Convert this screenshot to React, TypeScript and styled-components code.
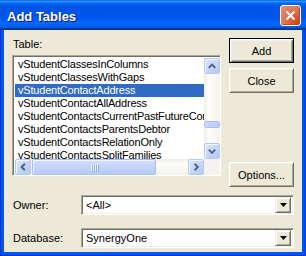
import styled, { createGlobalStyle } from 'styled-components'

const GlobalStyle = createGlobalStyle`
  body {
    margin: 0;
    background: #ffffff;
    font-family: "Liberation Sans", Arial, sans-serif;
  }
`

const tables = [
  'vStudentClassesInColumns',
  'vStudentClassesWithGaps',
  'vStudentContactAddress',
  'vStudentContactAllAddress',
  'vStudentContactsCurrentPastFutureContacts',
  'vStudentContactsParentsDebtor',
  'vStudentContactsRelationOnly',
  'vStudentContactsSplitFamilies',
]

const Window = styled.div`
  width: 306px;
  height: 256px;
  display: flex;
  flex-direction: column;
  background: #0055ea;
  box-sizing: border-box;
  border: 1px solid #0831d9;
  border-top: none;
`

const TitleBar = styled.div`
  height: 30px;
  margin: 0 -1px;
  display: flex;
  align-items: center;
  justify-content: space-between;
  padding: 0 5px 0 7px;
  background: linear-gradient(
    to bottom,
    #0058ee 0%,
    #3593ff 4%,
    #288eff 6%,
    #127dff 8%,
    #036ffc 10%,
    #0262ee 14%,
    #0057e5 20%,
    #0054e3 24%,
    #0055eb 56%,
    #005bf5 66%,
    #026afe 76%,
    #0062ef 86%,
    #0052d6 92%,
    #0040ab 94%,
    #003092 100%
  );
`

const Title = styled.span`
  color: #ffffff;
  font-weight: bold;
  font-size: 13px;
  padding-top: 2px;
  text-shadow: 1px 1px #0f1089;
`

const CloseButton = styled.div`
  width: 19px;
  height: 19px;
  border: 1px solid #ffffff;
  border-radius: 3px;
  display: flex;
  align-items: center;
  justify-content: center;
  background: radial-gradient(circle at 85% 85%, #cc4614 0%, #dc6a44 40%, #e2937b 100%);
  box-shadow: inset -1px -1px 0 #c0441c;
`

const Body = styled.div`
  flex: 1;
  margin: 0 3px 3px;
  background: #ece9d8;
  padding: 8px 8px 0 8px;
  display: flex;
  flex-direction: column;
  font-size: 11px;
  color: #000000;
`

const TopSection = styled.div`
  display: flex;
  gap: 8px;
`

const LeftCol = styled.div`
  width: 209px;
  display: flex;
  flex-direction: column;
`

const Label = styled.div`
  line-height: 13px;
  height: 13px;
  margin-bottom: 4px;
  padding-left: 1px;
`

const sunken = `
  border-top: 1px solid #aca899;
  border-left: 1px solid #aca899;
  border-bottom: 1px solid #ffffff;
  border-right: 1px solid #ffffff;
  box-shadow: inset 1px 1px 0 #716f64, inset -1px -1px 0 #f1efe2;
`

const ListBox = styled.div`
  ${sunken}
  height: 121px;
  box-sizing: border-box;
  padding: 2px;
  background: #ffffff;
  display: grid;
  grid-template-columns: 189px 16px;
  grid-template-rows: 101px 16px;
`

const Items = styled.div`
  overflow: hidden;
`

const Item = styled.div<{ $selected?: boolean }>`
  height: 13px;
  line-height: 13px;
  padding-left: 3px;
  white-space: nowrap;
  letter-spacing: -0.2px;
  background: ${(p) => (p.$selected ? '#316ac5' : 'transparent')};
  color: ${(p) => (p.$selected ? '#ffffff' : '#000000')};
`

const VTrack = styled.div`
  display: flex;
  flex-direction: column;
  background: linear-gradient(to right, #eeede5 0%, #fdfdfa 30%, #f4f3ee 100%);
`

const HTrack = styled.div`
  display: flex;
  background: linear-gradient(to bottom, #eeede5 0%, #fdfdfa 30%, #f4f3ee 100%);
`

const Corner = styled.div`
  background: #f4f3ee;
`

const ScrollBtn = styled.div`
  width: 16px;
  height: 16px;
  box-sizing: border-box;
  flex-shrink: 0;
  border: 1px solid #b4c8f6;
  border-radius: 2px;
  background: linear-gradient(135deg, #dbe6fd 0%, #c5d6fc 50%, #b4c8f6 100%);
  box-shadow: inset 1px 1px 0 #f2f6fe;
  display: flex;
  align-items: center;
  justify-content: center;
`

const TrackSpace = styled.div<{ $vertical?: boolean }>`
  flex: 1;
  display: flex;
  flex-direction: ${(p) => (p.$vertical ? 'column' : 'row')};
  padding: ${(p) => (p.$vertical ? '0' : '0 1px')};
`

const VThumb = styled.div`
  margin-top: 47px;
  height: 7px;
  box-sizing: border-box;
  border: 1px solid #a9bff0;
  border-radius: 2px;
  background: linear-gradient(to right, #cad9fd, #b9cdf8);
`

const HThumb = styled.div`
  width: 124px;
  box-sizing: border-box;
  border: 1px solid #a9bff0;
  border-radius: 2px;
  background: linear-gradient(to bottom, #d2defc 0%, #c4d5fc 50%, #b6caf6 100%);
  box-shadow: inset 1px 1px 0 #f0f4fe;
  display: flex;
  align-items: center;
  justify-content: center;
`

const Grip = styled.div`
  display: flex;
  gap: 1px;
  height: 7px;
`

const GripLine = styled.div`
  width: 1px;
  background: #eef4fe;
  box-shadow: 1px 1px 0 #8cb0f8;
`

const RightCol = styled.div`
  width: 65px;
  display: flex;
  flex-direction: column;
`

const Button = styled.div<{ $default?: boolean; $gap?: number }>`
  height: 25px;
  box-sizing: border-box;
  margin-top: ${(p) => p.$gap ?? 0}px;
  display: flex;
  align-items: center;
  justify-content: center;
  background: #ece9d8;
  font-size: 11px;
  ${(p) =>
    p.$default
      ? `
    border: 1px solid #000000;
    box-shadow: inset 1px 1px 0 #ffffff, inset -1px -1px 0 #716f64, inset 2px 2px 0 #f1efe2, inset -2px -2px 0 #aca899;
  `
      : `
    border-top: 1px solid #ffffff;
    border-left: 1px solid #ffffff;
    border-bottom: 1px solid #716f64;
    border-right: 1px solid #716f64;
    box-shadow: inset 1px 1px 0 #f1efe2, inset -1px -1px 0 #aca899;
  `}
`

const FieldRow = styled.div<{ $gap: number }>`
  display: flex;
  align-items: center;
  height: 20px;
  margin-top: ${(p) => p.$gap}px;
`

const FieldLabel = styled.div`
  width: 69px;
  padding-left: 1px;
  box-sizing: border-box;
`

const Combo = styled.div`
  ${sunken}
  width: 213px;
  height: 20px;
  box-sizing: border-box;
  padding: 2px;
  background: #ffffff;
  display: flex;
  align-items: center;
`

const ComboText = styled.div`
  flex: 1;
  padding-left: 2px;
  line-height: 16px;
`

const DropButton = styled.div`
  width: 16px;
  height: 16px;
  box-sizing: border-box;
  background: #ece9d8;
  border-top: 1px solid #f1efe2;
  border-left: 1px solid #f1efe2;
  border-bottom: 1px solid #716f64;
  border-right: 1px solid #716f64;
  box-shadow: inset 1px 1px 0 #ffffff, inset -1px -1px 0 #aca899;
  display: flex;
  align-items: center;
  justify-content: center;
`

const Arrow = ({ dir }: { dir: 'up' | 'down' | 'left' | 'right' }) => {
  const pts = {
    up: '4,9.5 7.5,6 11,9.5',
    down: '4,6 7.5,9.5 11,6',
    left: '9.5,4 6,7.5 9.5,11',
    right: '6,4 9.5,7.5 6,11',
  }[dir]
  return (
    <svg width="14" height="14" viewBox="0 0 15 15">
      <polyline points={pts} fill="none" stroke="#4d6185" strokeWidth="2" />
    </svg>
  )
}

const DropTriangle = () => (
  <svg width="7" height="4" viewBox="0 0 7 4">
    <polygon points="0,0 7,0 3.5,4" fill="#000000" />
  </svg>
)

const ComboBox = ({ value }: { value: string }) => (
  <Combo>
    <ComboText>{value}</ComboText>
    <DropButton>
      <DropTriangle />
    </DropButton>
  </Combo>
)

export default function App() {
  return (
    <>
      <GlobalStyle />
      <Window>
        <TitleBar>
          <Title>Add Tables</Title>
          <CloseButton>
            <svg width="11" height="11" viewBox="0 0 11 11">
              <path d="M1.5 1.5 L9.5 9.5 M9.5 1.5 L1.5 9.5" stroke="#ffffff" strokeWidth="2" />
            </svg>
          </CloseButton>
        </TitleBar>
        <Body>
          <TopSection>
            <LeftCol>
              <Label>Table:</Label>
              <ListBox>
                <Items>
                  {tables.map((t) => (
                    <Item key={t} $selected={t === 'vStudentContactAddress'}>
                      {t}
                    </Item>
                  ))}
                </Items>
                <VTrack>
                  <ScrollBtn>
                    <Arrow dir="up" />
                  </ScrollBtn>
                  <TrackSpace $vertical>
                    <VThumb />
                  </TrackSpace>
                  <ScrollBtn>
                    <Arrow dir="down" />
                  </ScrollBtn>
                </VTrack>
                <HTrack>
                  <ScrollBtn>
                    <Arrow dir="left" />
                  </ScrollBtn>
                  <TrackSpace>
                    <HThumb>
                      <Grip>
                        <GripLine />
                        <GripLine />
                        <GripLine />
                        <GripLine />
                      </Grip>
                    </HThumb>
                  </TrackSpace>
                  <ScrollBtn>
                    <Arrow dir="right" />
                  </ScrollBtn>
                </HTrack>
                <Corner />
              </ListBox>
            </LeftCol>
            <RightCol>
              <Button $default>Add</Button>
              <Button $gap={5}>Close</Button>
              <Button $gap={69}>Options...</Button>
            </RightCol>
          </TopSection>
          <FieldRow $gap={8}>
            <FieldLabel>Owner:</FieldLabel>
            <ComboBox value="<All>" />
          </FieldRow>
          <FieldRow $gap={13}>
            <FieldLabel>Database:</FieldLabel>
            <ComboBox value="SynergyOne" />
          </FieldRow>
        </Body>
      </Window>
    </>
  )
}
